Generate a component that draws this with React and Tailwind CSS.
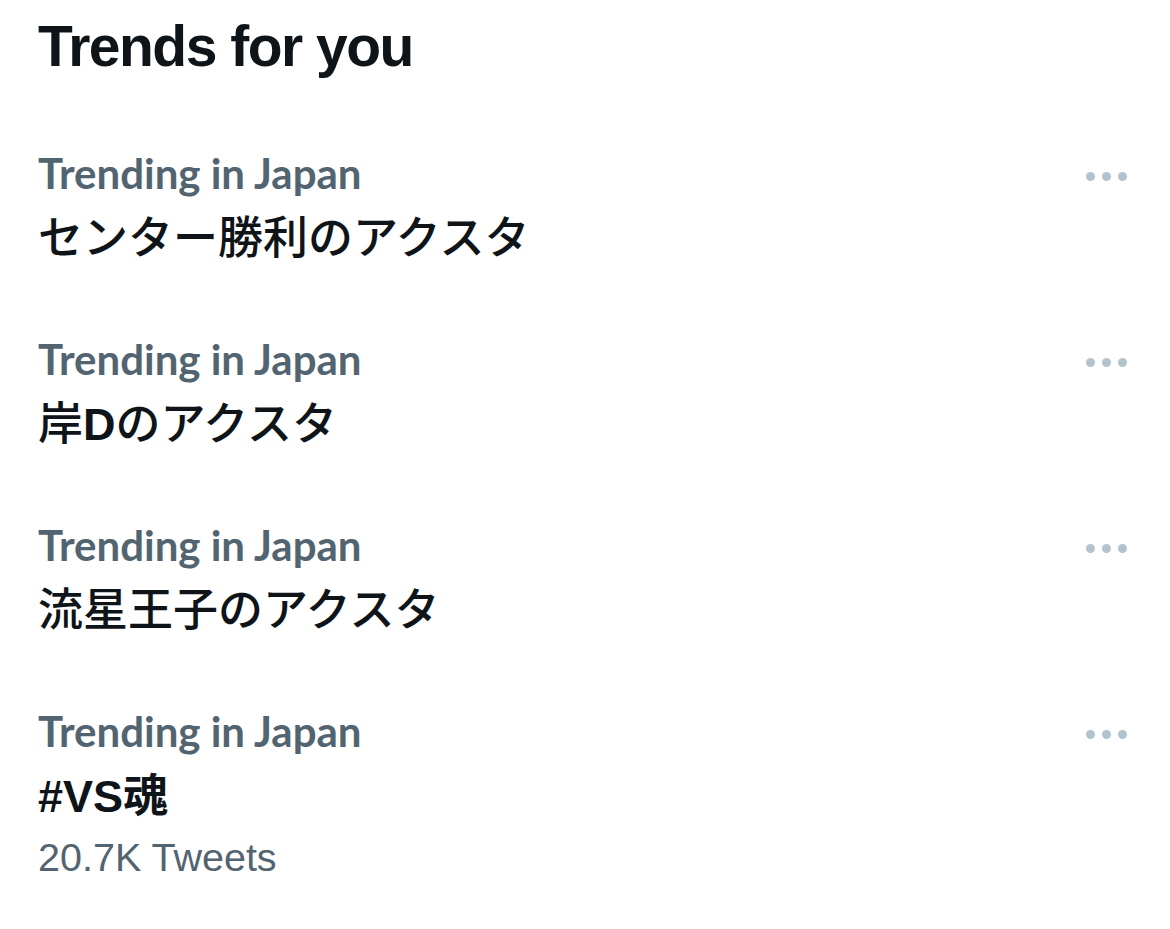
const trends = [
  { label: "Trending in Japan", name: ["センター勝利のアクスタ"] },
  { label: "Trending in Japan", name: ["岸", { b: "D" }, "のアクスタ"] },
  { label: "Trending in Japan", name: ["流星王子のアクスタ"] },
  { label: "Trending in Japan", name: [{ b: "#VS魂" }], count: "20.7K Tweets" },
];

const Dots = () => (
  <div className="flex items-center gap-[7px] pt-[23px]">
    <span className="block w-[9px] h-[9px] rounded-full bg-[#b3c3ce]" />
    <span className="block w-[9px] h-[9px] rounded-full bg-[#b3c3ce]" />
    <span className="block w-[9px] h-[9px] rounded-full bg-[#b3c3ce]" />
  </div>
);

const TrendRow = ({ label, name, count }) => (
  <div className="flex justify-between items-start pl-[38px] pr-[43px] h-[186px]">
    <div className="flex flex-col">
      <span
        className="text-[42px] leading-[48px] font-bold text-[#536471]"
        style={{ fontFamily: "Lato, 'Noto Sans', sans-serif" }}
      >
        {label}
      </span>
      <span
        className="mt-[11px] text-[45px] leading-[62px] font-medium text-[#0f1419]"
        style={{ fontFamily: "'Liberation Sans', 'Noto Sans CJK JP', sans-serif" }}
      >
        {name.map((part, i) =>
          typeof part === "string" ? (
            <span key={i}>{part}</span>
          ) : (
            <span key={i} className="font-bold">
              {part.b}
            </span>
          )
        )}
      </span>
      {count && (
        <span
          className="mt-[3px] text-[39.5px] leading-[52px] text-[#536471]"
          style={{ fontFamily: "'Liberation Sans', sans-serif" }}
        >
          {count}
        </span>
      )}
    </div>
    <Dots />
  </div>
);

export default function App() {
  return (
    <div className="w-[1170px] h-[929px] bg-white overflow-hidden">
      <h1
        className="pl-[38px] pt-[8px] text-[57px] leading-[76px] font-bold tracking-[-1.5px] text-[#0f1419]"
        style={{ fontFamily: "'Liberation Sans', sans-serif" }}
      >
        Trends for you
      </h1>
      <div className="pt-[65px]">
        {trends.map((t, i) => (
          <TrendRow key={i} {...t} />
        ))}
      </div>
    </div>
  );
}
